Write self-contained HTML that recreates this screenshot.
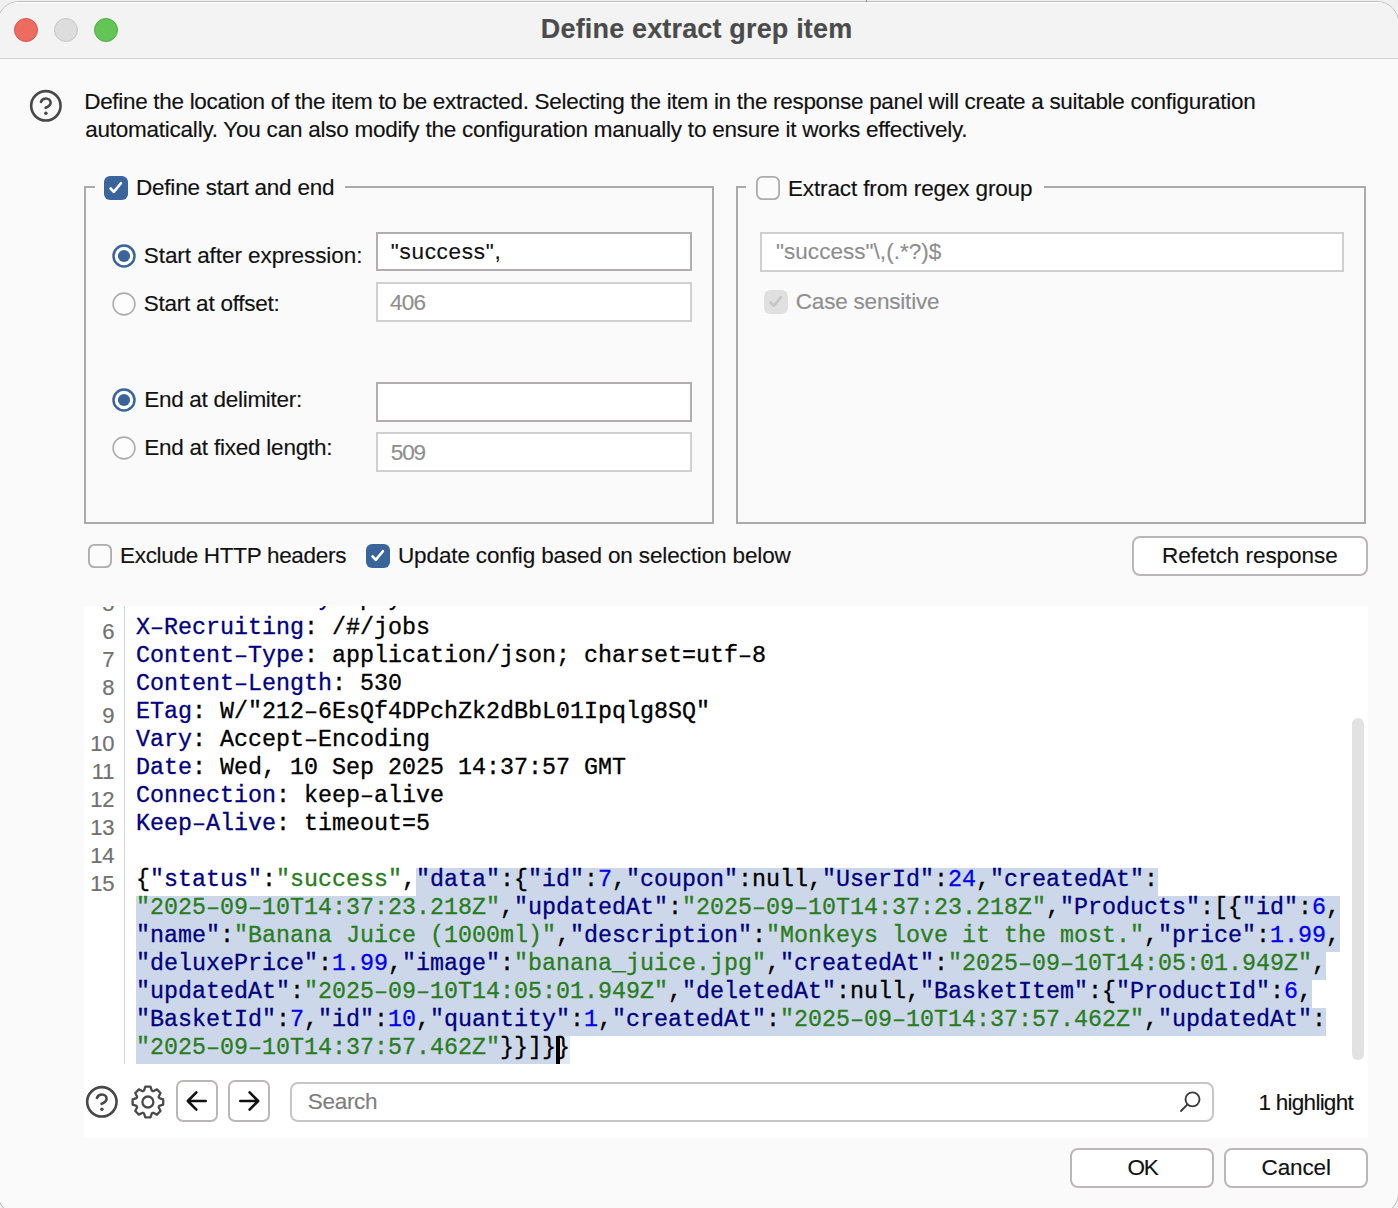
<!DOCTYPE html>
<html><head><meta charset="utf-8">
<style>
*{margin:0;padding:0;box-sizing:border-box}
html,body{width:1398px;height:1208px;overflow:hidden;background:#f0f0f0}
body{position:relative;font-family:"Liberation Sans",sans-serif;color:#111}
.a{position:absolute}
.t{position:absolute;white-space:pre;line-height:1;font-size:22.5px;-webkit-text-stroke:0.15px currentColor}
#win{position:absolute;left:-3px;top:1px;width:1402px;height:1214px;background:#fafafa;border-radius:22px;border:1px solid #bdbdbd;overflow:hidden}
#title{position:absolute;left:0;top:0;width:100%;height:57px;background:#f3f3f3;border-bottom:1px solid #d4d4d4;box-shadow:inset 0 1px 0 #fdfdfd}
.tl{position:absolute;width:24px;height:24px;border-radius:50%;top:15.8px}
.grp{position:absolute;border:2px solid #aaaaaa}
.field{position:absolute;background:#fff;border:2px solid #c9c9c9}
.cb{position:absolute;width:24px;height:24px;border-radius:6px}
.radio{position:absolute;width:24px;height:24px;border-radius:50%}
.btn{position:absolute;background:#fff;border:2px solid #bcb7b7;border-radius:8px}
.code{position:absolute;font-family:"Liberation Mono",monospace;font-size:23.333px;line-height:28px;white-space:pre;color:#000;-webkit-text-stroke:0.3px currentColor}
.ln{position:absolute;font-size:22px;line-height:28px;color:#717171;text-align:right;width:60px;white-space:pre;-webkit-text-stroke:0.2px currentColor}
.k{color:#000080}
.s{color:#2a7d1e}
.n{color:#0000f0}
.hl{position:absolute;background:#ccd8ea;height:28px}
</style></head><body>
<div id="win">
  <div id="title">
    <div class="tl" style="left:16px;background:#ee6b5f;border:1px solid #d9574b"></div>
    <div class="tl" style="left:56px;background:#dddddd;border:1px solid #c4c4c4"></div>
    <div class="tl" style="left:96px;background:#62c555;border:1px solid #52ad45"></div>
  </div>
</div>
<div class="a" id="tick" style="left:866px;top:0;width:1px;height:2px;background:#858585"></div>
<div class="t" style="left:540.8px;top:16.3px;font-weight:bold;color:#4b4b4b;letter-spacing:0.166px;font-size:27px">Define extract grep item</div>

<svg class="a" style="left:28px;top:88px" width="36" height="36" viewBox="0 0 36 36"><circle cx="17.86" cy="17.86" r="14.7" fill="none" stroke="#484848" stroke-width="2.6"/><path d="M12.9 13.9C13.8 11.7 15.7 10.5 17.9 10.5C20.6 10.5 22.6 12.3 22.6 14.7C22.6 17.3 20.2 18.7 17.6 19.8" fill="none" stroke="#484848" stroke-width="2.6" stroke-linecap="round"/><circle cx="17.9" cy="25.3" r="1.75" fill="#484848"/></svg>
<div class="t" style="left:84.2px;top:91.2px;letter-spacing:-0.304px;font-size:22.5px">Define the location of the item to be extracted. Selecting the item in the response panel will create a suitable configuration</div>
<div class="t" style="left:85.2px;top:119.2px;letter-spacing:-0.238px;font-size:22.5px">automatically. You can also modify the configuration manually to ensure it works effectively.</div>

<div class="grp" style="left:84px;top:186px;width:630px;height:338px"></div>
<div class="a" style="left:95px;top:176px;width:250px;height:22px;background:#fafafa"></div>
<div class="cb" style="left:104px;top:176px;background:#3a659c"></div>
<svg class="a" style="left:104px;top:176px" width="24" height="24"><path d="M6.6 12.5L9.8 15.9L16.9 7.2" fill="none" stroke="#fff" stroke-width="2.6" stroke-linecap="round" stroke-linejoin="round"/></svg>
<div class="t" style="left:136.0px;top:177.0px;letter-spacing:-0.217px;font-size:22.5px">Define start and end</div>

<svg class="a" style="left:112px;top:243.8px" width="24" height="24"><circle cx="12" cy="12" r="10.5" fill="#fff" stroke="#3a659c" stroke-width="2.5"/><circle cx="12" cy="12" r="6.1" fill="#3a659c"/></svg>
<div class="t" style="left:143.8px;top:245.2px;letter-spacing:-0.066px;font-size:22.5px">Start after expression:</div>
<div class="field" style="left:376px;top:232px;width:316px;height:39px;border-color:#b3aeae"></div>
<div class="t" style="left:390.8px;top:241.4px;letter-spacing:0.705px;font-size:22.5px">"success",</div>

<svg class="a" style="left:112px;top:291.8px" width="24" height="24"><circle cx="12" cy="12" r="10.9" fill="#fdfdfd" stroke="#adadad" stroke-width="1.6"/></svg>
<div class="t" style="left:143.8px;top:293.2px;letter-spacing:-0.240px;font-size:22.5px">Start at offset:</div>
<div class="field" style="left:376px;top:282px;width:316px;height:40px;border-color:#d0d0d0"></div>
<div class="t" style="left:390.0px;top:291.9px;color:#8e8e8e;letter-spacing:-0.813px;font-size:22.5px">406</div>

<svg class="a" style="left:112px;top:387.8px" width="24" height="24"><circle cx="12" cy="12" r="10.5" fill="#fff" stroke="#3a659c" stroke-width="2.5"/><circle cx="12" cy="12" r="6.1" fill="#3a659c"/></svg>
<div class="t" style="left:144.2px;top:389.0px;letter-spacing:-0.283px;font-size:22.5px">End at delimiter:</div>
<div class="field" style="left:376px;top:382px;width:316px;height:40px;border-color:#b3aeae"></div>

<svg class="a" style="left:112px;top:435.8px" width="24" height="24"><circle cx="12" cy="12" r="10.9" fill="#fdfdfd" stroke="#adadad" stroke-width="1.6"/></svg>
<div class="t" style="left:144.2px;top:437.0px;letter-spacing:-0.225px;font-size:22.5px">End at fixed length:</div>
<div class="field" style="left:376px;top:432px;width:316px;height:40px;border-color:#d0d0d0"></div>
<div class="t" style="left:390.8px;top:441.9px;color:#8e8e8e;letter-spacing:-1.113px;font-size:22.5px">509</div>

<div class="grp" style="left:736px;top:186px;width:630px;height:338px"></div>
<div class="a" style="left:746px;top:176px;width:298px;height:22px;background:#fafafa"></div>
<svg class="a" style="left:756px;top:176px" width="24" height="24"><rect x="0.9" y="0.9" width="22.2" height="22.2" rx="5.5" fill="#fbfbfb" stroke="#acacac" stroke-width="1.8"/></svg>
<div class="t" style="left:788.0px;top:177.6px;letter-spacing:-0.134px;font-size:22.5px">Extract from regex group</div>
<div class="field" style="left:760px;top:232px;width:584px;height:40px;border-color:#d0d0d0"></div>
<div class="t" style="left:776.0px;top:241.1px;color:#8e8e8e;letter-spacing:0.034px;font-size:22.5px">"success"\,(.*?)$</div>
<div class="cb" style="left:764px;top:290px;background:#e0e0e0"></div>
<svg class="a" style="left:764px;top:290px" width="24" height="24"><path d="M6.6 12.5L9.8 15.9L16.9 7.2" fill="none" stroke="#c6c6c6" stroke-width="2.6" stroke-linecap="round" stroke-linejoin="round"/></svg>
<div class="t" style="left:795.8px;top:291.4px;color:#8e8e8e;letter-spacing:-0.200px;font-size:22.5px">Case sensitive</div>

<svg class="a" style="left:88px;top:544px" width="24" height="24"><rect x="0.9" y="0.9" width="22.2" height="22.2" rx="5.5" fill="#fbfbfb" stroke="#acacac" stroke-width="1.8"/></svg>
<div class="t" style="left:120.0px;top:545.4px;letter-spacing:-0.303px;font-size:22.5px">Exclude HTTP headers</div>
<div class="cb" style="left:366px;top:544px;background:#3a659c"></div>
<svg class="a" style="left:366px;top:544px" width="24" height="24"><path d="M6.6 12.5L9.8 15.9L16.9 7.2" fill="none" stroke="#fff" stroke-width="2.6" stroke-linecap="round" stroke-linejoin="round"/></svg>
<div class="t" style="left:398.0px;top:545.4px;letter-spacing:-0.133px;font-size:22.5px">Update config based on selection below</div>
<div class="btn" style="left:1132px;top:536px;width:236px;height:40px"></div>
<div class="t" style="left:1162.1px;top:545.4px;letter-spacing:-0.049px;font-size:22.5px">Refetch response</div>
<div class="a" style="left:84px;top:606px;width:1284px;height:532px;background:#fff"></div>
<div class="a" style="left:84px;top:606px;width:1284px;height:458px;overflow:hidden">
<div class="code" style="left:52px;top:-20.9px"><span class="k">Feature–Policy</span>: payment &#x27;self&#x27;</div>
<div class="ln" style="left:-29.4px;top:-16.43px">5</div>
<div class="code" style="left:52px;top:7.6px"><span class="k">X–Recruiting</span>: /#/jobs</div>
<div class="ln" style="left:-29.4px;top:11.77px">6</div>
<div class="code" style="left:52px;top:35.6px"><span class="k">Content–Type</span>: application/json; charset=utf–8</div>
<div class="ln" style="left:-29.4px;top:39.77px">7</div>
<div class="code" style="left:52px;top:63.6px"><span class="k">Content–Length</span>: 530</div>
<div class="ln" style="left:-29.4px;top:67.77px">8</div>
<div class="code" style="left:52px;top:91.6px"><span class="k">ETag</span>: W/&quot;212–6EsQf4DPchZk2dBbL01Ipqlg8SQ&quot;</div>
<div class="ln" style="left:-29.4px;top:95.77px">9</div>
<div class="code" style="left:52px;top:119.6px"><span class="k">Vary</span>: Accept–Encoding</div>
<div class="ln" style="left:-29.4px;top:123.77px">10</div>
<div class="code" style="left:52px;top:147.6px"><span class="k">Date</span>: Wed, 10 Sep 2025 14:37:57 GMT</div>
<div class="ln" style="left:-29.4px;top:151.77px">11</div>
<div class="code" style="left:52px;top:175.6px"><span class="k">Connection</span>: keep–alive</div>
<div class="ln" style="left:-29.4px;top:179.77px">12</div>
<div class="code" style="left:52px;top:203.6px"><span class="k">Keep–Alive</span>: timeout=5</div>
<div class="ln" style="left:-29.4px;top:207.77px">13</div>
<div class="ln" style="left:-29.4px;top:235.77px">14</div>
<div class="ln" style="left:-29.4px;top:263.77px">15</div>
<div class="hl" style="left:332px;top:262px;width:742px"></div>
<div class="hl" style="left:52px;top:290px;width:1204px"></div>
<div class="hl" style="left:52px;top:318px;width:1204px"></div>
<div class="hl" style="left:52px;top:346px;width:1190px"></div>
<div class="hl" style="left:52px;top:374px;width:1176px"></div>
<div class="hl" style="left:52px;top:402px;width:1190px"></div>
<div class="hl" style="left:52px;top:430px;width:420px"></div>
<div class="hl" style="left:472px;top:430px;width:14px;background:#e2e8f3"></div>
<div class="a" style="left:472px;top:430px;width:4px;height:28px;background:#000"></div>
<div class="code" style="left:52px;top:259.6px">{<span class="k">&quot;status&quot;</span>:<span class="s">&quot;success&quot;</span>,<span class="k">&quot;data&quot;</span>:{<span class="k">&quot;id&quot;</span>:<span class="n">7</span>,<span class="k">&quot;coupon&quot;</span>:null,<span class="k">&quot;UserId&quot;</span>:<span class="n">24</span>,<span class="k">&quot;createdAt&quot;</span>:</div>
<div class="code" style="left:52px;top:287.6px"><span class="s">&quot;2025–09–10T14:37:23.218Z&quot;</span>,<span class="k">&quot;updatedAt&quot;</span>:<span class="s">&quot;2025–09–10T14:37:23.218Z&quot;</span>,<span class="k">&quot;Products&quot;</span>:[{<span class="k">&quot;id&quot;</span>:<span class="n">6</span>,</div>
<div class="code" style="left:52px;top:315.6px"><span class="k">&quot;name&quot;</span>:<span class="s">&quot;Banana Juice (1000ml)&quot;</span>,<span class="k">&quot;description&quot;</span>:<span class="s">&quot;Monkeys love it the most.&quot;</span>,<span class="k">&quot;price&quot;</span>:<span class="n">1.99</span>,</div>
<div class="code" style="left:52px;top:343.6px"><span class="k">&quot;deluxePrice&quot;</span>:<span class="n">1.99</span>,<span class="k">&quot;image&quot;</span>:<span class="s">&quot;banana_juice.jpg&quot;</span>,<span class="k">&quot;createdAt&quot;</span>:<span class="s">&quot;2025–09–10T14:05:01.949Z&quot;</span>,</div>
<div class="code" style="left:52px;top:371.6px"><span class="k">&quot;updatedAt&quot;</span>:<span class="s">&quot;2025–09–10T14:05:01.949Z&quot;</span>,<span class="k">&quot;deletedAt&quot;</span>:null,<span class="k">&quot;BasketItem&quot;</span>:{<span class="k">&quot;ProductId&quot;</span>:<span class="n">6</span>,</div>
<div class="code" style="left:52px;top:399.6px"><span class="k">&quot;BasketId&quot;</span>:<span class="n">7</span>,<span class="k">&quot;id&quot;</span>:<span class="n">10</span>,<span class="k">&quot;quantity&quot;</span>:<span class="n">1</span>,<span class="k">&quot;createdAt&quot;</span>:<span class="s">&quot;2025–09–10T14:37:57.462Z&quot;</span>,<span class="k">&quot;updatedAt&quot;</span>:</div>
<div class="code" style="left:52px;top:427.6px"><span class="s">&quot;2025–09–10T14:37:57.462Z&quot;</span>}}]}}</div>
<div class="a" style="left:40px;top:0;width:1px;height:458px;background:#d6d6d6"></div>
</div>
<div class="a" style="left:1352px;top:718px;width:12px;height:342px;border-radius:6px;background:#e2e2e2"></div>
<svg class="a" style="left:84px;top:1084px" width="36" height="36" viewBox="0 0 36 36"><circle cx="17.86" cy="17.86" r="14.7" fill="none" stroke="#484848" stroke-width="2.6"/><path d="M12.9 13.9C13.8 11.7 15.7 10.5 17.9 10.5C20.6 10.5 22.6 12.3 22.6 14.7C22.6 17.3 20.2 18.7 17.6 19.8" fill="none" stroke="#484848" stroke-width="2.6" stroke-linecap="round"/><circle cx="17.9" cy="25.3" r="1.75" fill="#484848"/></svg>
<svg class="a" style="left:129px;top:1084px" width="38" height="36" viewBox="0 0 38 36" id="gear"><path d="M16.34 2.71 L21.46 2.71 L22.81 6.65 L23.43 7.05 L24.16 7.21 L27.90 5.38 L31.52 9.00 L29.69 12.74 L29.85 13.47 L30.25 14.09 L34.19 15.44 L34.19 20.56 L30.25 21.91 L29.85 22.53 L29.69 23.26 L31.52 27.00 L27.90 30.62 L24.16 28.79 L23.43 28.95 L22.81 29.35 L21.46 33.29 L16.34 33.29 L14.99 29.35 L14.37 28.95 L13.64 28.79 L9.90 30.62 L6.28 27.00 L8.11 23.26 L7.95 22.53 L7.55 21.91 L3.61 20.56 L3.61 15.44 L7.55 14.09 L7.95 13.47 L8.11 12.74 L6.28 9.00 L9.90 5.38 L13.64 7.21 L14.37 7.05 L14.99 6.65Z" fill="none" stroke="#4a4a4a" stroke-width="2.3" stroke-linejoin="round"/><circle cx="18.9" cy="18" r="5.5" fill="none" stroke="#4a4a4a" stroke-width="2.3"/></svg>
<div class="btn" style="left:176px;top:1080px;width:42px;height:42px;border-radius:7px"></div>
<svg class="a" style="left:176px;top:1080px" width="42" height="42"><path d="M29.7 21H12M20.4 12.4L11.8 21l8.6 8.6" fill="none" stroke="#111" stroke-width="2.6" stroke-linecap="round" stroke-linejoin="round"/></svg>
<div class="btn" style="left:228px;top:1080px;width:42px;height:42px;border-radius:7px"></div>
<svg class="a" style="left:228px;top:1080px" width="42" height="42"><path d="M12.3 21H30M21.6 12.4l8.6 8.6-8.6 8.6" fill="none" stroke="#111" stroke-width="2.6" stroke-linecap="round" stroke-linejoin="round"/></svg>
<div class="a" style="left:290px;top:1082px;width:924px;height:40px;border:2px solid #c6c6c6;border-radius:8px;background:#fff"></div>
<div class="t" style="left:307.7px;top:1091.1px;color:#7d7d7d;letter-spacing:-0.275px;font-size:22.5px">Search</div>
<svg class="a" style="left:1175px;top:1085px" width="30" height="30"><circle cx="17.5" cy="14.35" r="7" fill="none" stroke="#3c3c3c" stroke-width="1.9"/><path d="M12.5 19.4L6 26" fill="none" stroke="#3c3c3c" stroke-width="1.9" stroke-linecap="round"/></svg>
<div class="t" style="left:1258.6px;top:1092.1px;letter-spacing:-0.753px;font-size:22.5px">1 highlight</div>

<div class="btn" style="left:1070px;top:1148px;width:144px;height:40px"></div>
<div class="t" style="left:1127.6px;top:1157.4px;letter-spacing:-1.401px;font-size:22.5px">OK</div>
<div class="btn" style="left:1224px;top:1148px;width:144px;height:40px"></div>
<div class="t" style="left:1261.6px;top:1157.4px;letter-spacing:-0.148px;font-size:22.5px">Cancel</div>
</body></html>
